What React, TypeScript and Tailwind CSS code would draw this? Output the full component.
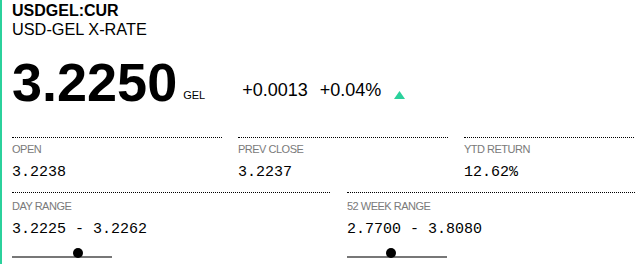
import React from "react";

const sans = { fontFamily: '"Liberation Sans", Arial, sans-serif' };

function Stat({ label, value, width, labelTop, dotLeft }: { label: string; value: string; width: string; labelTop: string; dotLeft?: number }) {
  return (
    <div className={`${width} shrink-0 border-t border-dotted border-black`}>
      <div className={`${labelTop} text-[11px] leading-[11px] tracking-[-0.5px] text-[#7a7a7a] uppercase`}>{label}</div>
      <div className="mt-[10px] font-['Liberation_Mono',monospace] text-[15px] leading-[15px] text-black">{value}</div>
      {dotLeft !== undefined && (
        <div className="relative mt-[19px] h-[2px] w-[100px] bg-[#777777]">
          <div className="absolute top-[-8px] h-[10px] w-[10px] rounded-full bg-black" style={{ left: dotLeft }} />
        </div>
      )}
    </div>
  );
}

export default function App() {
  return (
    <div className="flex h-[264px] w-[635px] overflow-hidden border-l-2 border-[#2bd19c] bg-white pl-[10px]" style={sans}>
      <div className="w-[700px] shrink-0">
        <div className="pt-[2px] text-[16px] leading-[18px] text-black">
          <div className="font-bold">USDGEL:CUR</div>
          <div className="text-[16.3px]">USD-GEL X-RATE</div>
        </div>
        <div className="mt-[18px] flex items-end">
          <div className="text-[54px] font-bold leading-[53px] text-black">3.2250</div>
          <div className="mb-[8px] ml-[6px] text-[11px] leading-[11px] text-black">GEL</div>
          <div className="mb-[10px] ml-[37px] text-[18px] leading-[17px] text-black">+0.0013</div>
          <div className="mb-[10px] ml-[12px] text-[18px] leading-[17px] text-black">+0.04%</div>
          <svg className="mb-[10px] ml-[13px]" width="11" height="8" viewBox="0 0 11 8">
            <polygon points="5.5,0 11,8 0,8" fill="#2bd19c" />
          </svg>
        </div>
        <div className="mt-[28px] flex gap-[16px]">
          <Stat label="Open" value="3.2238" width="w-[210px]" labelTop="mt-[6px]" />
          <Stat label="Prev Close" value="3.2237" width="w-[210px]" labelTop="mt-[6px]" />
          <Stat label="YTD Return" value="12.62%" width="w-[210px]" labelTop="mt-[6px]" />
        </div>
        <div className="mt-[12px] flex gap-[17px]">
          <Stat label="Day Range" value="3.2225 - 3.2262" width="w-[318px]" labelTop="mt-[8px]" dotLeft={61} />
          <Stat label="52 Week Range" value="2.7700 - 3.8080" width="w-[318px]" labelTop="mt-[8px]" dotLeft={39} />
        </div>
      </div>
    </div>
  );
}
